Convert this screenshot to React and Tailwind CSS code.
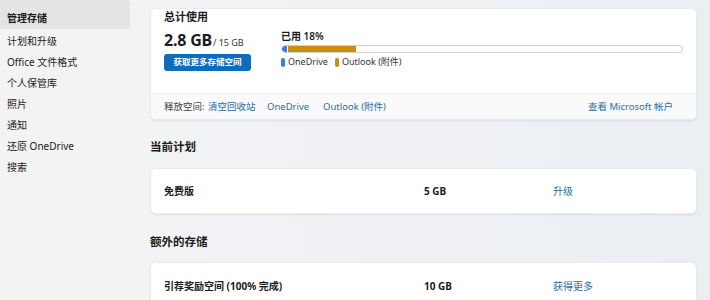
export default function App() {
  const font = { fontFamily: '"Noto Sans", "Noto Sans CJK SC", sans-serif' };
  const navItems = ["计划和升级", "Office 文件格式", "个人保管库", "照片", "通知", "还原 OneDrive", "搜索"];

  return (
    <div style={font} className="flex w-[710px] h-[300px] overflow-hidden bg-[#f3f3f3] text-[#1b1b1b]">
      {/* sidebar */}
      <div className="w-[140px] shrink-0 bg-[#f3f3f3]">
        <div className="w-[130px] h-[29px] bg-[#e4e4e4] rounded-r-[3px] flex items-end pb-[4px] pl-[7px] text-[10px] leading-[14px] font-bold">
          管理存储
        </div>
        <div className="h-[1px]"></div>
        {navItems.map((item) => (
          <div key={item} className="h-[21px] flex items-center pl-[7px] text-[10px] leading-[14px] text-[#222]">
            {item}
          </div>
        ))}
      </div>

      {/* main */}
      <div className="flex-1 pl-[10px] pr-[13px] bg-gradient-to-r from-[#f2f3f5] to-[#ebeef3]">
        <div className="mt-[8px] bg-white rounded-[6px] shadow-[0_1px_2px_rgba(0,0,0,0.08)] border border-[#ececec] overflow-hidden">
          <div className="h-[84px] px-[13px]">
            <div className="text-[11px] leading-[14px] font-bold pt-[1px]">总计使用</div>
            <div className="flex">
              <div className="w-[117px] shrink-0">
                <div className="mt-[7px] flex items-baseline">
                  <span className="text-[16px] leading-[19px] font-bold tracking-[-0.2px]">2.8 GB</span>
                  <span className="text-[9px] text-[#333] ml-[1px]">/ 15 GB</span>
                </div>
                <div className="mt-[4px] w-[87px] h-[17px] bg-[#0f6cbd] rounded-[3px] text-white text-[8.5px] font-bold flex items-center justify-center">
                  获取更多存储空间
                </div>
              </div>
              <div className="flex-1">
                <div className="mt-[5px] text-[10px] leading-[14px] font-semibold">已用 18%</div>
                <div className="mt-[2px] h-[8px] rounded-full border border-[#cfcfcf] flex overflow-hidden">
                  <div className="w-[5px] h-full bg-[#3b7ddd] rounded-l-full"></div>
                  <div className="w-[68px] h-full bg-[#c98e0c] ml-[1px]"></div>
                </div>
                <div className="mt-[3px] flex items-center text-[9px] leading-[12px] text-[#333]">
                  <span className="w-[4px] h-[9px] rounded-[2px] bg-[#3b7ddd] mr-[3px]"></span>
                  <span>OneDrive</span>
                  <span className="w-[4px] h-[9px] rounded-[2px] bg-[#c98e0c] ml-[7px] mr-[3px]"></span>
                  <span>Outlook (附件)</span>
                </div>
              </div>
            </div>
          </div>
          <div className="h-[26px] bg-[#fafafa] border-t border-[#f0f0f0] px-[13px] flex items-center text-[9.5px] leading-[12px]">
            <span className="text-[#444] w-[44px]">释放空间:</span>
            <span className="text-[#2a6ea5] w-[59px]">清空回收站</span>
            <span className="text-[#2a6ea5] w-[56px]">OneDrive</span>
            <span className="text-[#2a6ea5]">Outlook (附件)</span>
            <span className="text-[#2a6ea5] ml-auto mr-[10px]">查看 Microsoft 帐户</span>
          </div>
        </div>

        <div className="pt-[20px] text-[11.5px] leading-[14px] font-bold">当前计划</div>
        <div className="mt-[14px] h-[46px] bg-white rounded-[6px] shadow-[0_1px_2px_rgba(0,0,0,0.08)] border border-[#ececec] flex items-center px-[13px] text-[10px]">
          <span className="w-[260px] font-bold">免费版</span>
          <span className="w-[129px] font-bold">5 GB</span>
          <span className="text-[#2a6ea5]">升级</span>
        </div>

        <div className="pt-[21px] text-[11.5px] leading-[14px] font-bold">额外的存储</div>
        <div className="mt-[13px] h-[60px] bg-white rounded-[6px] shadow-[0_1px_2px_rgba(0,0,0,0.08)] border border-[#ececec] flex items-start pt-[16px] px-[13px] text-[10px] leading-[14px]">
          <span className="w-[260px] font-bold">引荐奖励空间 (100% 完成)</span>
          <span className="w-[129px] font-bold">10 GB</span>
          <span className="text-[#2a6ea5]">获得更多</span>
        </div>
      </div>
    </div>
  );
}
